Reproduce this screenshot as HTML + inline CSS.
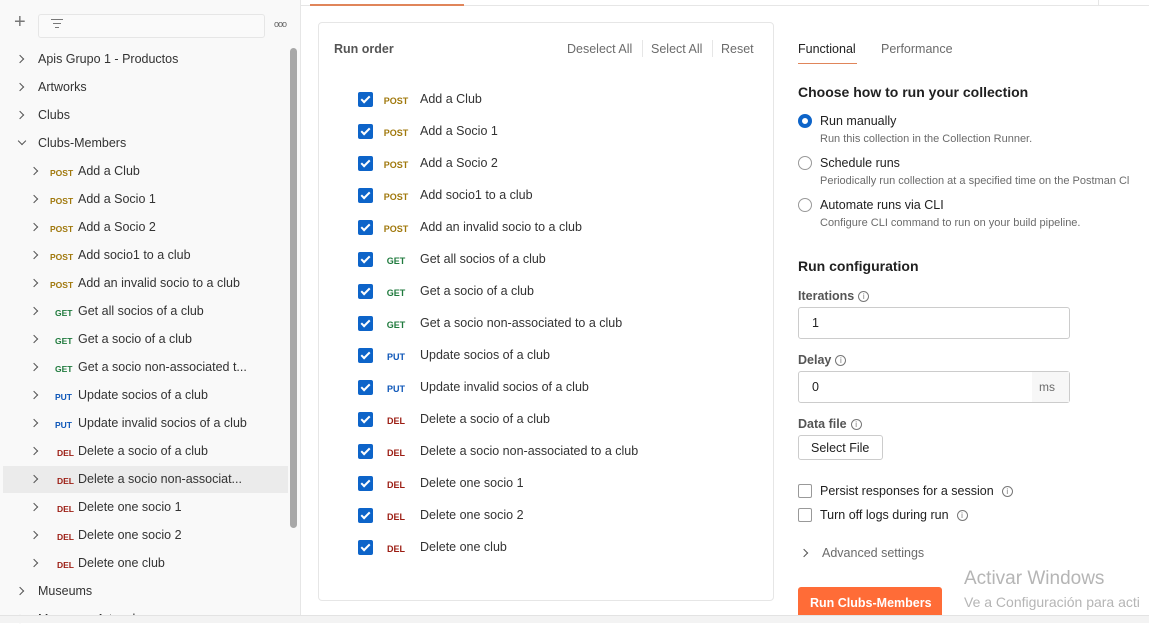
<!DOCTYPE html>
<html><head><meta charset="utf-8"><style>
*{margin:0;padding:0;box-sizing:border-box}
body{width:1149px;height:623px;overflow:hidden;background:#fff;font-family:"Liberation Sans",sans-serif;font-size:12.5px;color:#212121;position:relative}
.a{position:absolute;white-space:nowrap}
.side{position:absolute;left:0;top:0;width:301px;height:623px;background:#f9f9f9;border-right:1px solid #e6e6e6}
.m{font-size:9px;font-weight:bold;display:inline-block}
.post{color:#a0780c}.get{color:#1f7a3d}.put{color:#0d56b8}.del{color:#9b1c12}
.chev{position:absolute;width:6px;height:6px;border-right:1.2px solid #555;border-bottom:1.2px solid #555;transform:rotate(-45deg)}
.cb{position:absolute;left:358px;width:15px;height:15px;background:#0d64c9;border-radius:2px}
.cb:after{content:"";position:absolute;left:5px;top:2px;width:3px;height:7px;border-right:2px solid #fff;border-bottom:2px solid #fff;transform:rotate(45deg)}
.gray{color:#6b6b6b}
.info{display:inline-block;width:11px;height:11px;border:1px solid #777;border-radius:50%;font-size:8px;text-align:center;line-height:9px;color:#777;vertical-align:1px;margin-left:4px;font-weight:normal}
.radio{position:absolute;left:798px;width:14px;height:14px;border:1px solid #999;border-radius:50%}
.box{position:absolute;left:798px;width:14px;height:14px;border:1px solid #999;border-radius:2px}
</style></head><body>
<div class="side">
<div class="a" style="left:14px;top:11px;font-size:20px;color:#777;font-weight:300">+</div>
<div class="a" style="left:38px;top:14px;width:227px;height:24px;border:1px solid #e6e6e6;border-radius:3px;background:#fafafa"></div>
<div class="a" style="left:51px;top:19px;width:12px;border-top:1.3px solid #777"></div>
<div class="a" style="left:53px;top:23px;width:8px;border-top:1.3px solid #777"></div>
<div class="a" style="left:55px;top:27px;width:4px;border-top:1.3px solid #777"></div>
<div class="a" style="left:274px;top:19px;font-size:9px;color:#666;letter-spacing:-1px">ooo</div>
<div class="a" style="left:3px;top:466px;width:285px;height:27px;background:#ebebeb"></div>
<div class="a" style="left:290px;top:48px;width:7px;height:480px;background:#a8a8a8;border-radius:4px"></div>
</div>
<div id="tree"></div>
<div class="a" style="left:301px;top:5px;width:848px;border-top:1px solid #e6e6e6"></div>
<div class="a" style="left:310px;top:4px;width:154px;border-top:2px solid #e0855a"></div>
<div class="a" style="left:1098px;top:0;height:5px;border-left:1px solid #e6e6e6"></div>
<div class="a" style="left:318px;top:22px;width:456px;height:579px;border:1px solid #e6e6e6;border-radius:4px"></div>
<div class="a" style="left:334px;top:42px;font-weight:bold;color:#555;font-size:12.5px">Run order</div>
<div class="a gray" style="left:567px;top:42px">Deselect All</div>
<div class="a" style="left:642px;top:40px;height:17px;border-left:1px solid #e6e6e6"></div>
<div class="a gray" style="left:651px;top:42px">Select All</div>
<div class="a" style="left:712px;top:40px;height:17px;border-left:1px solid #e6e6e6"></div>
<div class="a gray" style="left:721px;top:42px">Reset</div>
<div id="runs"></div>
<div class="a" style="left:798px;top:42px">Functional</div>
<div class="a" style="left:798px;top:63px;width:59px;border-top:1px solid #e0855a"></div>
<div class="a gray" style="left:881px;top:42px">Performance</div>
<div class="a" style="left:798px;top:84px;font-size:14px;font-weight:bold">Choose how to run your collection</div>
<div class="radio" style="top:114px;border:4px solid #0d64c9"></div>
<div class="a" style="left:820px;top:114px">Run manually</div>
<div class="a gray" style="left:820px;top:133px;font-size:11px">Run this collection in the Collection Runner.</div>
<div class="radio" style="top:156px"></div>
<div class="a" style="left:820px;top:156px">Schedule runs</div>
<div class="a gray" style="left:820px;top:175px;font-size:11px">Periodically run collection at a specified time on the Postman Cl</div>
<div class="radio" style="top:198px"></div>
<div class="a" style="left:820px;top:198px">Automate runs via CLI</div>
<div class="a gray" style="left:820px;top:217px;font-size:11px">Configure CLI command to run on your build pipeline.</div>
<div class="a" style="left:798px;top:258px;font-size:14px;font-weight:bold">Run configuration</div>
<div class="a" style="left:798px;top:289px;font-weight:bold;color:#555">Iterations<span class="info">i</span></div>
<div class="a" style="left:798px;top:307px;width:272px;height:32px;border:1px solid #ccc;border-radius:3px;padding:8px 13px">1</div>
<div class="a" style="left:798px;top:353px;font-weight:bold;color:#555">Delay<span class="info">i</span></div>
<div class="a" style="left:798px;top:371px;width:272px;height:32px;border:1px solid #ccc;border-radius:3px;padding:8px 13px">0</div>
<div class="a gray" style="left:1032px;top:372px;width:37px;height:30px;background:#f7f7f7;padding:8px 7px;font-size:12px">ms</div>
<div class="a" style="left:798px;top:417px;font-weight:bold;color:#555">Data file<span class="info">i</span></div>
<div class="a" style="left:798px;top:435px;width:85px;height:25px;border:1px solid #ccc;border-radius:3px;padding:5px 12px">Select File</div>
<div class="box" style="top:484px"></div>
<div class="a" style="left:820px;top:484px">Persist responses for a session<span class="info" style="margin-left:8px">i</span></div>
<div class="box" style="top:508px"></div>
<div class="a" style="left:820px;top:508px">Turn off logs during run<span class="info" style="margin-left:8px">i</span></div>
<div class="chev" style="left:801px;top:550px"></div>
<div class="a gray" style="left:822px;top:546px">Advanced settings</div>
<div class="a" style="left:798px;top:587px;width:144px;height:32px;background:#ff6c37;border-radius:3px;color:#fff;font-weight:bold;padding:9px 12px">Run Clubs-Members</div>
<div class="a" style="left:964px;top:568px;font-size:19px;color:#b5b5b5">Activar Windows</div>
<div class="a" style="left:964px;top:594px;font-size:14px;color:#b5b5b5">Ve a Configuración para acti</div>
<div class="a" style="left:0;top:615px;width:1149px;height:8px;background:#f3f3f3;border-top:1px solid #e3e3e3"></div>
<script>
var tree=[[0,"","Apis Grupo 1 - Productos"],[0,"","Artworks"],[0,"","Clubs"],[2,"","Clubs-Members"],
[1,"post","Add a Club"],[1,"post","Add a Socio 1"],[1,"post","Add a Socio 2"],[1,"post","Add socio1 to a club"],[1,"post","Add an invalid socio to a club"],
[1,"get","Get all socios of a club"],[1,"get","Get a socio of a club"],[1,"get","Get a socio non-associated t..."],
[1,"put","Update socios of a club"],[1,"put","Update invalid socios of a club"],
[1,"del","Delete a socio of a club"],[1,"del","Delete a socio non-associat..."],[1,"del","Delete one socio 1"],[1,"del","Delete one socio 2"],[1,"del","Delete one club"],
[0,"","Museums"],[0,"","Museums-Artworks"]];
var h="";
tree.forEach(function(t,i){var y=59+28*i;
var cx=t[0]==1?31:17;
if(t[0]==2)h+='<div class="chev" style="left:19px;top:'+(y-5)+'px;transform:rotate(45deg)"></div>';
else h+='<div class="chev" style="left:'+cx+'px;top:'+(y-3)+'px"></div>';
if(t[0]==1){var lbl=t[1]=="del"?"DEL":t[1].toUpperCase();
h+='<div class="a" style="left:'+(t[1]=="post"?50:(t[1]=="del"?57:55))+'px;top:'+(y-6)+'px"><span class="m '+t[1]+'" style="font-size:8.5px">'+lbl+'</span></div>';
h+='<div class="a" style="left:78px;top:'+(y-7)+'px;color:#333">'+t[2]+'</div>';}
else h+='<div class="a" style="left:38px;top:'+(y-7)+'px;color:#333">'+t[2]+'</div>';});
document.getElementById("tree").innerHTML=h;
var r="";
tree.slice(4,19).forEach(function(t,i){var y=99+32*i;
r+='<div class="cb" style="top:'+(y-7)+'px"></div>';
r+='<div class="a" style="left:380px;width:32px;text-align:center;top:'+(y-6)+'px"><span class="m '+t[1]+'">'+t[1].toUpperCase()+'</span></div>';
var n=t[2];if(n=="Get a socio non-associated t...")n="Get a socio non-associated to a club";if(n=="Delete a socio non-associat...")n="Delete a socio non-associated to a club";
r+='<div class="a" style="left:420px;top:'+(y-7)+'px;color:#333">'+n+'</div>';});
document.getElementById("runs").innerHTML=r;
</script>
</body></html>
